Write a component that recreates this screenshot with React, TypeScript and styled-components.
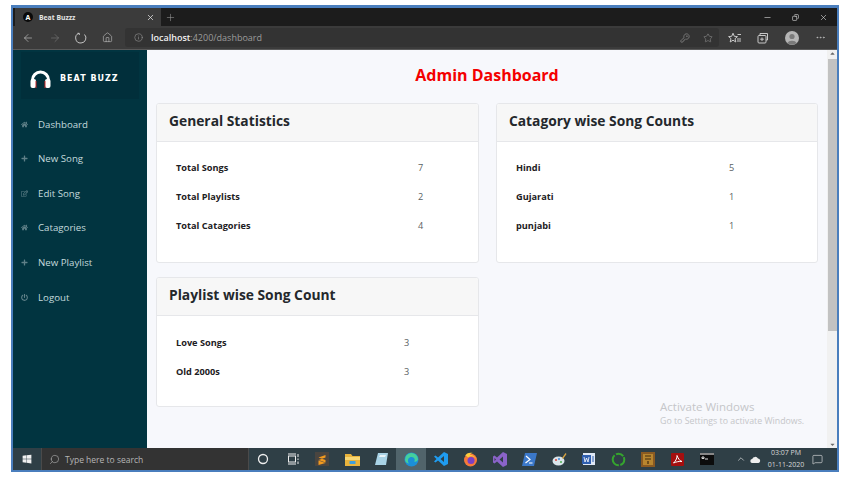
import * as React from 'react';
import styled, { createGlobalStyle } from 'styled-components';
import { ArrowLeft, ArrowRight, Home, Info, Star, Plus, X, Minus, MoreHorizontal, Search, ChevronUp, MessageSquare, Copy, KeyRound } from 'lucide-react';
import { FaHome, FaPlus, FaRegEdit, FaPowerOff, FaCaretUp, FaCaretDown, FaWindows } from 'react-icons/fa';

const GlobalStyle = createGlobalStyle`
    html, body {
        margin: 0;
        padding: 0;
        background: #ffffff;
        overflow: hidden;
    }
    * {
        box-sizing: border-box;
    }
`;

const Frame = styled.div`
    margin: 5px 0 0 11px;
    width: 828px;
    height: 467px;
    border: 2px solid #4a7ebd;
    border-top-width: 3px;
    display: flex;
    flex-direction: column;
    font-family: 'Open Sans', sans-serif;
`;

const TabBar = styled.div`
    height: 18px;
    background: #1c1c1c;
    display: flex;
    align-items: stretch;
    color: #dddddd;
`;

const Tab = styled.div`
    width: 146px;
    margin-left: 2px;
    background: #3b3b3b;
    display: flex;
    align-items: center;
    padding: 0 6px 0 8px;
    font-size: 6.8px;
    font-weight: 700;
    color: #e4e4e4;
    & .title {
        flex-grow: 1;
        margin-left: 6px;
    }
`;

const Favicon = styled.span`
    width: 10px;
    height: 10px;
    border-radius: 50%;
    background: #0a0a0a;
    color: #ffffff;
    font-size: 7px;
    font-weight: 700;
    display: flex;
    align-items: center;
    justify-content: center;
`;

const NewTab = styled.div`
    width: 19px;
    display: flex;
    align-items: center;
    justify-content: center;
    color: #9a9a9a;
`;

const WindowButtons = styled.div`
    margin-left: auto;
    display: flex;
    align-items: center;
    color: #e8e8e8;
    & > span {
        width: 28px;
        display: flex;
        justify-content: center;
    }
`;

const Toolbar = styled.div`
    height: 24px;
    background: #3b3b3b;
    border-bottom: 1px solid #5a5a5a;
    display: flex;
    align-items: center;
    padding-left: 2px;
    color: #b9b9b9;
`;

const NavButton = styled.span<{ $dim?: boolean }>`
    width: 26.5px;
    display: flex;
    justify-content: center;
    color: ${p => (p.$dim ? '#777777' : '#c4c4c4')};
`;

const AddressBar = styled.div`
    width: 594px;
    height: 19px;
    margin-left: 4px;
    background: #333333;
    border-radius: 3px;
    display: flex;
    align-items: center;
    padding: 0 6px 0 9px;
    font-size: 9px;
    color: #9c9c9c;
    & b {
        color: #f0f0f0;
        font-weight: 600;
    }
    & .url {
        margin-left: 8px;
        flex-grow: 1;
    }
    & .tool {
        margin-left: 13px;
        display: flex;
    }
`;

const ToolGroup = styled.div`
    display: flex;
    align-items: center;
    flex-grow: 1;
    justify-content: space-around;
    padding: 0 3px 0 1px;
    color: #c8c8c8;
`;

const Viewport = styled.div`
    flex: 1;
    min-height: 0;
    display: flex;
    position: relative;
    background: #f7f8fc;
`;

const Sidebar = styled.aside`
    width: 134px;
    flex-shrink: 0;
    background: #013440;
    padding: 2px 8px 0;
`;

const Logo = styled.div`
    height: 47px;
    background: #012f3b;
    display: flex;
    align-items: center;
    padding: 6px 0 0 9px;
    color: #ffffff;
    font-family: 'DejaVu Sans', sans-serif;
    font-size: 8px;
    font-weight: 700;
    letter-spacing: 1px;
    gap: 9px;
`;

const Nav = styled.nav`
    margin: 8px -8px 0;
    display: flex;
    flex-direction: column;
`;

const NavItem = styled.div`
    height: 34.5px;
    display: flex;
    align-items: center;
    padding-left: 8px;
    gap: 10px;
    color: #c4dadd;
    font-size: 9.7px;
    & svg {
        width: 7px;
        height: 7px;
        color: #5f8088;
        flex-shrink: 0;
    }
    &:last-child {
        margin-top: 1px;
    }
`;

const Content = styled.main`
    flex: 1;
    min-width: 0;
    padding: 0 9px;
`;

const PageTitle = styled.h1`
    margin: 0;
    height: 53px;
    display: flex;
    align-items: center;
    justify-content: center;
    padding: 0 0 4px 0;
    width: 662px;
    color: #f40000;
    font-size: 16px;
    font-weight: 700;
`;

const CardGrid = styled.div`
    display: grid;
    grid-template-columns: 323px 322px;
    column-gap: 17px;
    row-gap: 14px;
    align-items: start;
`;

const Card = styled.section<{ $height: number }>`
    height: ${p => p.$height}px;
    background: #ffffff;
    border: 1px solid #e6e7ea;
    border-radius: 3px;
    overflow: hidden;
`;

const CardHeader = styled.h2`
    margin: 0;
    height: 38px;
    background: #f7f7f7;
    border-bottom: 1px solid #e6e7ea;
    display: flex;
    align-items: center;
    padding: 0 0 4px 12px;
    font-size: 13.8px;
    font-weight: 700;
    color: #24282c;
`;

const CardBody = styled.div<{ $top: number }>`
    padding: ${p => p.$top}px 19px 0;
`;

const StatRow = styled.div<{ $valueX: number }>`
    height: 29px;
    display: grid;
    grid-template-columns: ${p => p.$valueX}px 1fr;
    align-items: center;
    font-size: 9.2px;
    color: #5a5f63;
    & b {
        font-weight: 700;
        color: #1d2023;
    }
`;

const Scrollbar = styled.div`
    width: 10px;
    flex-shrink: 0;
    background: #f1f1f1;
    display: flex;
    flex-direction: column;
    align-items: center;
    color: #6a6a6a;
    & .thumb {
        width: 9px;
        height: 272px;
        background: #c2c2c2;
        margin-top: 2px;
    }
    & .end {
        margin-top: auto;
    }
`;

const Watermark = styled.div`
    position: absolute;
    left: 647px;
    top: 350px;
    color: #c5c6c9;
    font-size: 8.8px;
    line-height: 14px;
    & div:first-child {
        font-size: 11.5px;
    }
`;

const Taskbar = styled.footer`
    height: 22px;
    background: #2f3f46;
    display: flex;
    align-items: center;
    color: #f0f0f0;
`;

const StartButton = styled.div`
    width: 28px;
    display: flex;
    justify-content: center;
`;

const SearchBox = styled.div`
    width: 207.5px;
    height: 22px;
    background: #333333;
    border: 1px solid #4a4a4a;
    border-width: 0 1px;
    display: flex;
    align-items: center;
    padding-left: 7px;
    gap: 5px;
    color: #b5b5b5;
    font-size: 8.5px;
`;

const Slot = styled.div<{ $active?: boolean }>`
    width: 29.6px;
    height: 22px;
    flex-shrink: 0;
    display: flex;
    align-items: center;
    justify-content: center;
    background: ${p => (p.$active ? '#51646b' : 'transparent')};
`;

const Tray = styled.div`
    flex: 1;
    display: flex;
    align-items: center;
    padding-left: 14px;
    & .cloud {
        margin-left: 4px;
    }
    & .clock {
        margin-left: 5px;
        width: 40px;
        text-align: center;
        font-size: 7px;
        line-height: 12px;
        color: #d8d8d8;
    }
    & .notify {
        margin-left: 6px;
    }
`;

const stats = [
    { label: 'Total Songs', value: 7 },
    { label: 'Total Playlists', value: 2 },
    { label: 'Total Catagories', value: 4 },
];
const categories = [
    { label: 'Hindi', value: 5 },
    { label: 'Gujarati', value: 1 },
    { label: 'punjabi', value: 1 },
];
const playlists = [
    { label: 'Love Songs', value: 3 },
    { label: 'Old 2000s', value: 3 },
];
const menu = [
    { label: 'Dashboard', icon: <FaHome /> },
    { label: 'New Song', icon: <FaPlus /> },
    { label: 'Edit Song', icon: <FaRegEdit /> },
    { label: 'Catagories', icon: <FaHome /> },
    { label: 'New Playlist', icon: <FaPlus /> },
    { label: 'Logout', icon: <FaPowerOff /> },
];

const taskIcons: React.ReactNode[] = [
    <svg key="cortana" width="12" height="12" viewBox="0 0 12 12"><circle cx="6" cy="6" r="4.5" fill="none" stroke="#eee" strokeWidth="1.3" /></svg>,
    <svg key="view" width="12" height="12" viewBox="0 0 12 12" fill="none" stroke="#eee"><rect x="1.5" y="3" width="7" height="6" /><path d="M1 1h8M1 11h8M11 1v3M11 5.5v1.5M11 8.5v2.5" /></svg>,
    <svg key="sublime" width="14" height="14" viewBox="0 0 14 14"><rect width="14" height="14" fill="#4a4540" /><path d="M3.5 5.5 10.5 3v2.5L3.5 8zM3.5 8l7 2.5V8L3.5 5.5zM3.5 8.5l7 2.500V11L3.500 13z" fill="#f29a1f" /></svg>,
    <svg key="explorer" width="15" height="13" viewBox="0 0 15 13"><path d="M0 1h6l1.500 2H15v10H0z" fill="#e8b33c" /><rect y="4" width="15" height="3" fill="#f7d774" /><rect x="4.500" y="8" width="6" height="3" fill="#3f9fdc" /></svg>,
    <svg key="notepad" width="14" height="14" viewBox="0 0 14 14"><path d="M3 1h10l-2 12H0z" fill="#a9d3e6" /><path d="M5 3h6l-1 2H4z" fill="#e9f4f8" /></svg>,
    <svg key="edge" width="15" height="15" viewBox="0 0 15 15"><circle cx="7.500" cy="7.500" r="7" fill="#1b8fd8" /><path d="M1 8a6.500 6.500 0 0 1 13-1c0 2-2 3-4 2.500C12 8 10 4.500 7 5 4 5.500 3 9 5 11.500 3 11.500 1.500 10 1 8z" fill="#45cf9c" /></svg>,
    <svg key="vscode" width="14" height="14" viewBox="0 0 14 14"><path d="M10 0l4 2v10l-4 2-6-5.500L1.500 10.500 0 9.500 2.500 7 0 4.500l1.500-1L4 5.500zM10 4 6.500 7l3.500 3z" fill="#1f9cf0" /></svg>,
    <svg key="firefox" width="15" height="15" viewBox="0 0 15 15"><circle cx="7.500" cy="8" r="6.500" fill="#f5793a" /><circle cx="8" cy="8.500" r="3.500" fill="#7b3fc4" /><path d="M2 4c1-3 5-4 8-3-2 0-3 1-3 2 3 0 6 2 6.500 5C13 5 8 3 6 5 4 6.500 4 3 2 4z" fill="#ffcb3d" /></svg>,
    <svg key="vs" width="14" height="15" viewBox="0 0 14 15"><path d="M10 0l4 2v11l-4 2-6-5.500L1.500 11.500 0 10.500V4.500l1.500-1L4 5.500zM10 4.500 6.500 7.500l3.500 3zM1.500 6v3l1.500-1.500z" fill="#8a63c9" /></svg>,
    <svg key="powershell" width="15" height="13" viewBox="0 0 15 13"><path d="M3 0h12l-3 13H0z" fill="#3b78c9" /><path d="M4 3l4 3.500L3.500 10M7 10h3.500" fill="none" stroke="#fff" strokeWidth="1.200" /></svg>,
    <svg key="paint" width="15" height="15" viewBox="0 0 15 15"><ellipse cx="6.500" cy="9" rx="6" ry="4.500" fill="#d9e4ea" /><circle cx="4" cy="8" r="1" fill="#d9453c" /><circle cx="7" cy="7" r="1" fill="#3d8be0" /><circle cx="9" cy="10" r="1" fill="#4cb050" /><path d="M10 6 13.500 1 14.500 2 11 7z" fill="#d9a441" /></svg>,
    <svg key="word" width="14" height="14" viewBox="0 0 14 14"><rect x="1" y="1" width="12" height="12" fill="#dfe8f5" /><rect x="0" y="3" width="9" height="9" fill="#2f5faf" /><path d="M2 5l1 5 1.500-4L6 10l1-5" fill="none" stroke="#fff" strokeWidth=".8" /><path d="M10 5h2M10 7h2M10 9h2" stroke="#2f5faf" /></svg>,
    <svg key="ring" width="15" height="15" viewBox="0 0 15 15"><circle cx="7.500" cy="7.500" r="5.800" fill="none" stroke="#35a52e" strokeWidth="2" strokeDasharray="7 1.500 14 1.500 8 1" /></svg>,
    <svg key="book" width="14" height="15" viewBox="0 0 14 15"><rect width="14" height="15" fill="#8a5a22" /><rect x="2" y="2" width="10" height="11" fill="#b8862f" /><path d="M4 4h6M4 7h6M7 9v3" stroke="#3f2a10" strokeWidth="1.200" /></svg>,
    <svg key="pdf" width="13" height="13" viewBox="0 0 13 13"><rect width="13" height="13" rx="1" fill="#a50f0f" /><path d="M2.500 10C5 8 6.500 4 6 2.500 7 5 8.500 8 11 8.500 8 8 5 9 2.500 10z" fill="none" stroke="#fff" /></svg>,
    <svg key="cmd" width="14" height="12" viewBox="0 0 14 12"><rect width="14" height="12" fill="#0c0c0c" /><rect width="14" height="2" fill="#888" /><path d="M2 4h2v1.500H2zM5 6h3" stroke="#ddd" /></svg>,
];

const headphones = (
    <svg width="21" height="18" viewBox="0 0 21 18">
        <path d="M2.500 13V10a8 8 0 0 1 16 0v3" fill="none" stroke="#fff" strokeWidth="3" />
        <rect x="0.500" y="9" width="5.500" height="9" rx="2" fill="#fff" />
        <rect x="15" y="9" width="5.500" height="9" rx="2" fill="#fff" />
        <rect x="5.500" y="11" width="1" height="7" fill="#c92a2a" />
        <rect x="14.500" y="11" width="1" height="7" fill="#c92a2a" />
    </svg>
);

const refreshRing = (
    <svg width="12" height="12" viewBox="0 0 12 12" fill="none" stroke="currentColor" strokeWidth="1">
        <path d="M4 1.300A5 5 0 0 0 6 11 5 5 0 0 0 9.500 2.500" />
        <path d="M2.500 1.300 4.300 1.300 4.300 3" />
    </svg>
);

const favourites = (
    <svg width="13" height="12" viewBox="0 0 13 12" fill="none" stroke="currentColor" strokeWidth="1">
        <path d="M5 1.200 6.300 4.300 9.500 4.600 7 6.700 7.800 10 5 8.200 2.200 10 3 6.700 .6 4.600 3.700 4.300z" />
        <path d="M9 7h4M9 9h4M9.500 2.500H13" />
    </svg>
);

const collections = (
    <svg width="12" height="12" viewBox="0 0 12 12" fill="none" stroke="currentColor" strokeWidth="1">
        <path d="M3 3V1.500h7.500V8H9" />
        <rect x="1" y="3.500" width="8" height="7.500" rx="1" />
        <path d="M5 5.500v3.500M3.200 7.200h3.600" />
    </svg>
);

const avatar = (
    <svg width="14" height="14" viewBox="0 0 14 14">
        <circle cx="7" cy="7" r="7" fill="#b5b5b5" />
        <circle cx="7" cy="5.500" r="2.600" fill="#7a7a7a" />
        <path d="M2.300 12a5 3.500 0 0 1 9.400 0A7 7 0 0 1 2.300 12z" fill="#7a7a7a" />
    </svg>
);

const Stats: React.FC<{ rows: { label: string; value: number }[]; valueX: number; top: number }> = ({ rows, valueX, top }) => (
    <CardBody $top={top}>
        {rows.map(row => (
            <StatRow key={row.label} $valueX={valueX}>
                <b>{row.label}</b>
                <span>{row.value}</span>
            </StatRow>
        ))}
    </CardBody>
);

const App: React.FC = () => (
    <>
        <GlobalStyle />
        <Frame>
            <TabBar>
                <Tab>
                    <Favicon>A</Favicon>
                    <span className="title">Beat Buzzz</span>
                    <X size={9} strokeWidth={2} />
                </Tab>
                <NewTab>
                    <Plus size={11} strokeWidth={1.2} />
                </NewTab>
                <WindowButtons>
                    <span><Minus size={9} strokeWidth={1.5} /></span>
                    <span><Copy size={7} strokeWidth={2} style={{ transform: 'scaleX(-1)' }} /></span>
                    <span><X size={9} strokeWidth={1.5} /></span>
                </WindowButtons>
            </TabBar>
            <Toolbar>
                <NavButton><ArrowLeft size={12} strokeWidth={1.3} /></NavButton>
                <NavButton $dim><ArrowRight size={12} strokeWidth={1.3} /></NavButton>
                <NavButton>{refreshRing}</NavButton>
                <NavButton><Home size={11} strokeWidth={1.3} /></NavButton>
                <AddressBar>
                    <Info size={9} strokeWidth={1.5} />
                    <span className="url"><b>localhost</b>:4200/dashboard</span>
                    <span className="tool"><KeyRound size={10} strokeWidth={1.4} /></span>
                    <span className="tool"><Star size={10} strokeWidth={1.2} /></span>
                </AddressBar>
                <ToolGroup>
                    {favourites}
                    {collections}
                    {avatar}
                    <MoreHorizontal size={11} strokeWidth={1.4} />
                </ToolGroup>
            </Toolbar>
            <Viewport>
                <Sidebar>
                    <Logo>
                        {headphones}
                        <span>BEAT BUZZ</span>
                    </Logo>
                    <Nav>
                        {menu.map(item => (
                            <NavItem key={item.label}>
                                {item.icon}
                                <span>{item.label}</span>
                            </NavItem>
                        ))}
                    </Nav>
                </Sidebar>
                <Content>
                    <PageTitle>Admin Dashboard</PageTitle>
                    <CardGrid>
                        <Card $height={160}>
                            <CardHeader>General Statistics</CardHeader>
                            <Stats rows={stats} valueX={242} top={11} />
                        </Card>
                        <Card $height={160}>
                            <CardHeader>Catagory wise Song Counts</CardHeader>
                            <Stats rows={categories} valueX={213} top={11} />
                        </Card>
                        <Card $height={130}>
                            <CardHeader>Playlist wise Song Count</CardHeader>
                            <Stats rows={playlists} valueX={228} top={12} />
                        </Card>
                    </CardGrid>
                </Content>
                <Scrollbar>
                    <FaCaretUp size={7} />
                    <div className="thumb" />
                    <FaCaretDown size={7} className="end" />
                </Scrollbar>
                <Watermark>
                    <div>Activate Windows</div>
                    <div>Go to Settings to activate Windows.</div>
                </Watermark>
            </Viewport>
            <Taskbar>
                <StartButton><FaWindows size={10} /></StartButton>
                <SearchBox>
                    <Search size={11} strokeWidth={1.3} style={{ transform: 'scaleX(-1)' }} />
                    <span>Type here to search</span>
                </SearchBox>
                {taskIcons.map((icon, i) => (
                    <Slot key={i} $active={i === 5}>{icon}</Slot>
                ))}
                <Tray>
                    <ChevronUp size={10} strokeWidth={1.5} />
                    <svg className="cloud" width="11" height="7" viewBox="0 0 11 7"><path d="M2.500 7a2 2 0 0 1-.3-4A3.200 3.200 0 0 1 8 2.500 2.300 2.300 0 0 1 8.500 7z" fill="#eee" /></svg>
                    <div className="clock">
                        <div>03:07 PM</div>
                        <div>01-11-2020</div>
                    </div>
                    <MessageSquare className="notify" size={11} strokeWidth={1.3} />
                </Tray>
            </Taskbar>
        </Frame>
    </>
);

export default App;
